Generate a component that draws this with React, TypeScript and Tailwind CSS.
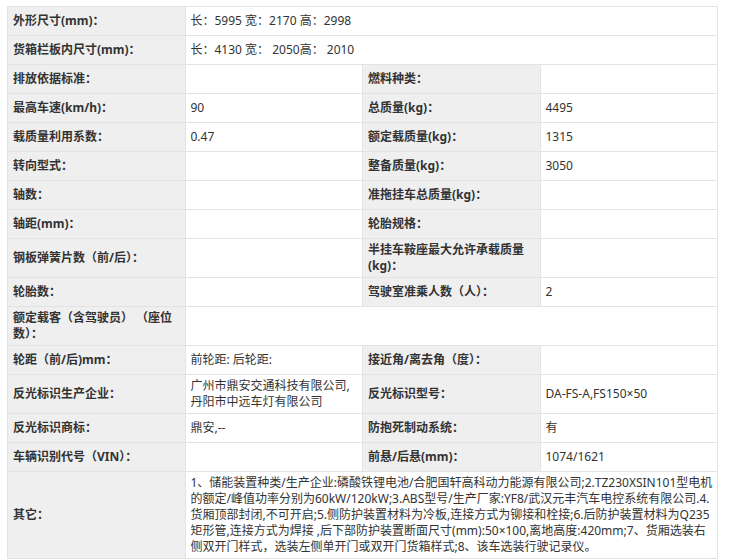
import React from 'react';

type Cell = { text?: React.ReactNode; label?: boolean; span?: boolean };

const rows: Cell[][] = [
  [{ text: '外形尺寸(mm)：', label: true }, { text: '长：5995 宽：2170 高：2998', span: true }],
  [{ text: '货箱栏板内尺寸(mm)：', label: true }, { text: '长：4130 宽： 2050高： 2010', span: true }],
  [{ text: '排放依据标准：', label: true }, {}, { text: '燃料种类：', label: true }, {}],
  [{ text: '最高车速(km/h)：', label: true }, { text: '90' }, { text: '总质量(kg)：', label: true }, { text: '4495' }],
  [{ text: '载质量利用系数：', label: true }, { text: '0.47' }, { text: '额定载质量(kg)：', label: true }, { text: '1315' }],
  [{ text: '转向型式：', label: true }, {}, { text: '整备质量(kg)：', label: true }, { text: '3050' }],
  [{ text: '轴数：', label: true }, {}, { text: '准拖挂车总质量(kg)：', label: true }, {}],
  [{ text: '轴距(mm)：', label: true }, {}, { text: '轮胎规格：', label: true }, {}],
  [{ text: '钢板弹簧片数（前/后）：', label: true }, {}, { text: '半挂车鞍座最大允许承载质量(kg)：', label: true }, {}],
  [{ text: '轮胎数：', label: true }, {}, { text: '驾驶室准乘人数（人）：', label: true }, { text: '2' }],
  [{ text: '额定载客（含驾驶员） （座位数）：', label: true }, { span: true }],
  [{ text: '轮距（前/后)mm：', label: true }, { text: '前轮距: 后轮距:' }, { text: '接近角/离去角（度）：', label: true }, {}],
  [
    { text: '反光标识生产企业：', label: true },
    { text: '广州市鼎安交通科技有限公司,丹阳市中远车灯有限公司' },
    { text: '反光标识型号：', label: true },
    { text: 'DA-FS-A,FS150×50' },
  ],
  [{ text: '反光标识商标：', label: true }, { text: '鼎安,--' }, { text: '防抱死制动系统：', label: true }, { text: '有' }],
  [{ text: '车辆识别代号（VIN）：', label: true }, {}, { text: '前悬/后悬(mm)：', label: true }, { text: '1074/1621' }],
];

const other = [
  '1、储能装置种类/生产企业:磷酸铁锂电池/合肥国轩高科动力能源有限公司;2.TZ230XSIN101型电机',
  '的额定/峰值功率分别为60kW/120kW;3.ABS型号/生产厂家:YF8/武汉元丰汽车电控系统有限公司.4.',
  '货厢顶部封闭,不可开启;5.侧防护装置材料为冷板,连接方式为铆接和栓接;6.后防护装置材料为Q235',
  '矩形管,连接方式为焊接 ,后下部防护装置断面尺寸(mm):50×100,离地高度:420mm;7、货厢选装右',
  '侧双开门样式，选装左侧单开门或双开门货箱样式;8、该车选装行驶记录仪。',
];

const App = () => {
  return (
    <div className="w-[741px] h-[559px] overflow-hidden bg-white pl-[7px] pt-[6px] font-['Noto_Sans','Noto_Sans_CJK_SC',sans-serif]">
      <div className="w-[711px] grid grid-cols-4 gap-px bg-[#e3e3e3] border border-[#e3e3e3] text-[12px] leading-[16px] text-[#333]">
        {rows.map((row, r) =>
          row.map((cell, c) => (
            <div
              key={`${r}-${c}`}
              className={`min-h-[28px] flex items-center pl-[5px] pr-[4px] py-[3px] ${
                cell.label ? 'bg-[#efefef] font-bold' : 'bg-white'
              } ${cell.span ? 'col-span-3' : ''}`}
            >
              {cell.text}
            </div>
          ))
        )}

        {/* 其它 */}
        <div className="min-h-[28px] flex items-center pl-[5px] pr-[4px] py-[3px] bg-[#efefef] font-bold">其它：</div>
        <div className="col-span-3 bg-white pl-[5px] pr-[4px] py-[3px]">
          {other.map((line, i) => (
            <div key={i} className="whitespace-nowrap">{line}</div>
          ))}
        </div>
      </div>
    </div>
  );
};

export default App;
